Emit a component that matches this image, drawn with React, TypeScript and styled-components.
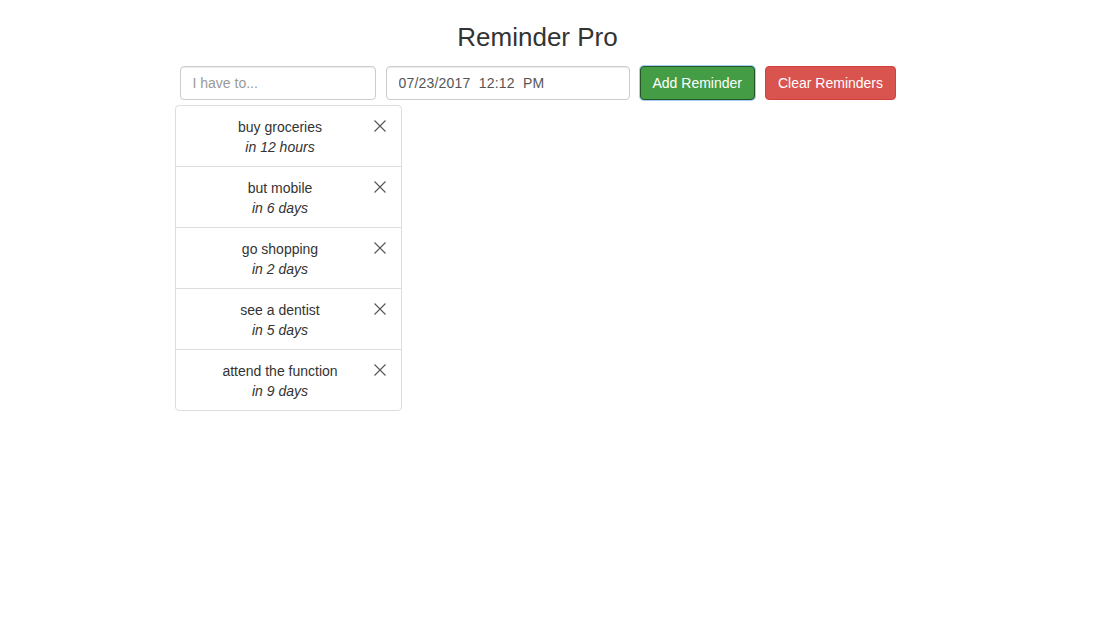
import React from "react";
import styled, { createGlobalStyle } from "styled-components";

const Global = createGlobalStyle`
  body {
    margin: 0;
    background: #fff;
    font-family: "Liberation Sans", Arial, sans-serif;
    font-size: 14px;
    line-height: 20px;
    color: #333;
  }
`;

const Page = styled.div`
  width: 726px;
  margin-left: calc(50% - 375px);
`;

const Title = styled.h3`
  margin: 23px 0 14px;
  font-size: 26px;
  font-weight: 400;
  line-height: 1.1;
  text-align: center;
  color: #333;
`;

const Form = styled.div`
  display: flex;
  gap: 10px;
  padding-left: 5px;
`;

const Input = styled.input<{ $w: number }>`
  box-sizing: border-box;
  width: ${p => p.$w}px;
  height: 34px;
  padding: 6px 12px;
  font-family: inherit;
  font-size: 14px;
  color: #555;
  border: 1px solid #ccc;
  border-radius: 4px;
  box-shadow: inset 0 1px 1px rgba(0, 0, 0, 0.075);
  outline: none;
  white-space: pre;

  &::placeholder {
    color: #999;
  }
`;

const DateInput = styled(Input)`
  letter-spacing: 0.2px;
`;

const Button = styled.button<{ $kind: "success" | "danger" }>`
  box-sizing: border-box;
  height: 34px;
  padding: 6px 12px;
  font-family: inherit;
  font-size: 14px;
  color: #fff;
  border-radius: 4px;
  cursor: pointer;
  background: ${p => (p.$kind === "success" ? "#449d44" : "#d9534f")};
  border: 1px solid ${p => (p.$kind === "success" ? "#255625" : "#d43f3a")};
  box-shadow: ${p =>
    p.$kind === "success" ? "0 0 0 1px rgba(102, 175, 233, 0.6)" : "none"};
`;

const List = styled.ul`
  list-style: none;
  margin: 5px 0 0;
  padding: 0;
  width: 227px;
`;

const Item = styled.li`
  display: flex;
  padding: 10px 15px;
  border: 1px solid #ddd;
  margin-bottom: -1px;
  background: #fff;

  &:first-child {
    border-radius: 4px 4px 0 0;
  }
  &:last-child {
    margin-bottom: 0;
    border-radius: 0 0 4px 4px;
  }
`;

const Text = styled.div`
  flex: 1;
  text-align: center;
  transform: translateY(1px);
`;

const Due = styled.div`
  font-style: italic;
`;

const Close = styled.span`
  width: 16px;
  display: flex;
  justify-content: flex-end;
  padding-top: 4px;
  cursor: pointer;
`;

const reminders = [
  { text: "buy groceries", due: "in 12 hours" },
  { text: "but mobile", due: "in 6 days" },
  { text: "go shopping", due: "in 2 days" },
  { text: "see a dentist", due: "in 5 days" },
  { text: "attend the function", due: "in 9 days" },
];

const CloseIcon = () => (
  <svg width="12" height="12" viewBox="0 0 12 12">
    <path d="M0.5 0.5 L11.5 11.5 M11.5 0.5 L0.5 11.5" stroke="#555" strokeWidth="1.1" fill="none" />
  </svg>
);

export default function App() {
  return (
    <Page>
      <Global />
      <Title>Reminder Pro</Title>
      <Form>
        <Input $w={196} placeholder="I have to..." />
        <DateInput $w={244} defaultValue={"07/23/2017  12:12  PM"} />
        <Button $kind="success">Add Reminder</Button>
        <Button $kind="danger">Clear Reminders</Button>
      </Form>
      <List>
        {reminders.map(r => (
          <Item key={r.text}>
            <Text>
              <div>{r.text}</div>
              <Due>{r.due}</Due>
            </Text>
            <Close>
              <CloseIcon />
            </Close>
          </Item>
        ))}
      </List>
    </Page>
  );
}
